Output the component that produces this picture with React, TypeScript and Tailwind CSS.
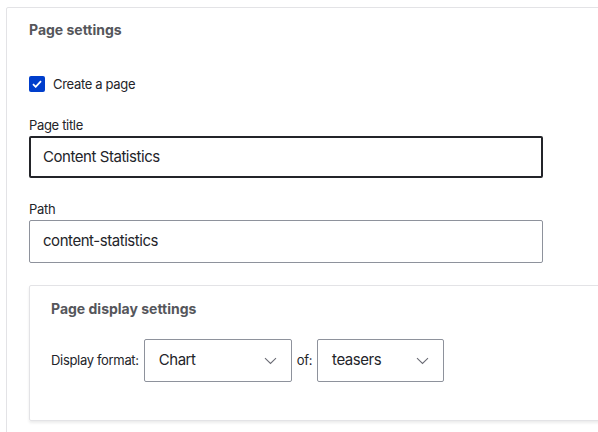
import React from "react";

const Chevron: React.FC = () => (
  <svg width="13" height="8" viewBox="0 0 13 8" fill="none" className="shrink-0">
    <path d="M1 1.2 L6.5 6.4 L12 1.2" stroke="#6b6c75" strokeWidth="1.1" />
  </svg>
);

const Select: React.FC<{ value: string; width: string }> = ({ value, width }) => (
  <div
    className={`${width} h-[43px] border border-[#8e929c] rounded-[2px] bg-white flex items-center justify-between pl-[14px] pr-[14px] text-[15px] tracking-[-0.03em] text-[#232429]`}
  >
    <span>{value}</span>
    <Chevron />
  </div>
);

const App: React.FC = () => {
  return (
    <div
      className="w-[598px] h-[432px] overflow-hidden bg-white pt-[7px] pl-[6px]"
      style={{ fontFamily: "Inter, 'Noto Sans', sans-serif" }}
    >
      <div className="w-[660px] border border-[#e3e3e6] rounded-[2px] pl-[22px] pt-[12px] pb-[40px]">
        <h2 className="text-[14px] leading-[20px] font-bold text-[#55565b]">Page settings</h2>

        <label className="mt-[36px] flex items-center gap-[8px] h-[16px]">
          <span className="w-[16px] h-[16px] rounded-[2px] bg-[#003ecc] flex items-center justify-center">
            <svg width="10" height="8" viewBox="0 0 10 8" fill="none">
              <path d="M1 4.2 L3.7 6.8 L9 1.2" stroke="#fff" strokeWidth="1.8" />
            </svg>
          </span>
          <span className="text-[13px] leading-[18px] tracking-[-0.025em] text-[#232429]">Create a page</span>
        </label>

        <div className="mt-[24px] text-[13px] leading-[18px] tracking-[-0.025em] text-[#232429]">Page title</div>
        <div className="mt-[2px] w-[514px] h-[42px] border-2 border-[#232429] rounded-[2px] flex items-center pl-[12px] text-[15px] tracking-[-0.03em] text-[#232429]">
          Content Statistics
        </div>

        <div className="mt-[22px] text-[13px] leading-[18px] tracking-[-0.025em] text-[#232429]">Path</div>
        <div className="mt-[2px] w-[514px] h-[43px] border border-[#8e929c] rounded-[2px] flex items-center pl-[13px] text-[15px] tracking-[-0.03em] text-[#232429]">
          content-statistics
        </div>

        <div className="mt-[22px] mr-[23px] border border-[#e3e3e6] rounded-[2px] shadow-[0_2px_3px_rgba(0,0,0,0.08)] pl-[21px] pt-[13px] pb-[38px]">
          <h3 className="text-[14px] leading-[20px] font-bold text-[#55565b]">Page display settings</h3>
          <div className="mt-[20px] flex items-center gap-[5px] text-[13px] tracking-[-0.025em] text-[#232429]">
            <span>Display format:</span>
            <Select value="Chart" width="w-[148px]" />
            <span>of:</span>
            <Select value="teasers" width="w-[127px]" />
          </div>
        </div>
      </div>
    </div>
  );
};

export default App;
